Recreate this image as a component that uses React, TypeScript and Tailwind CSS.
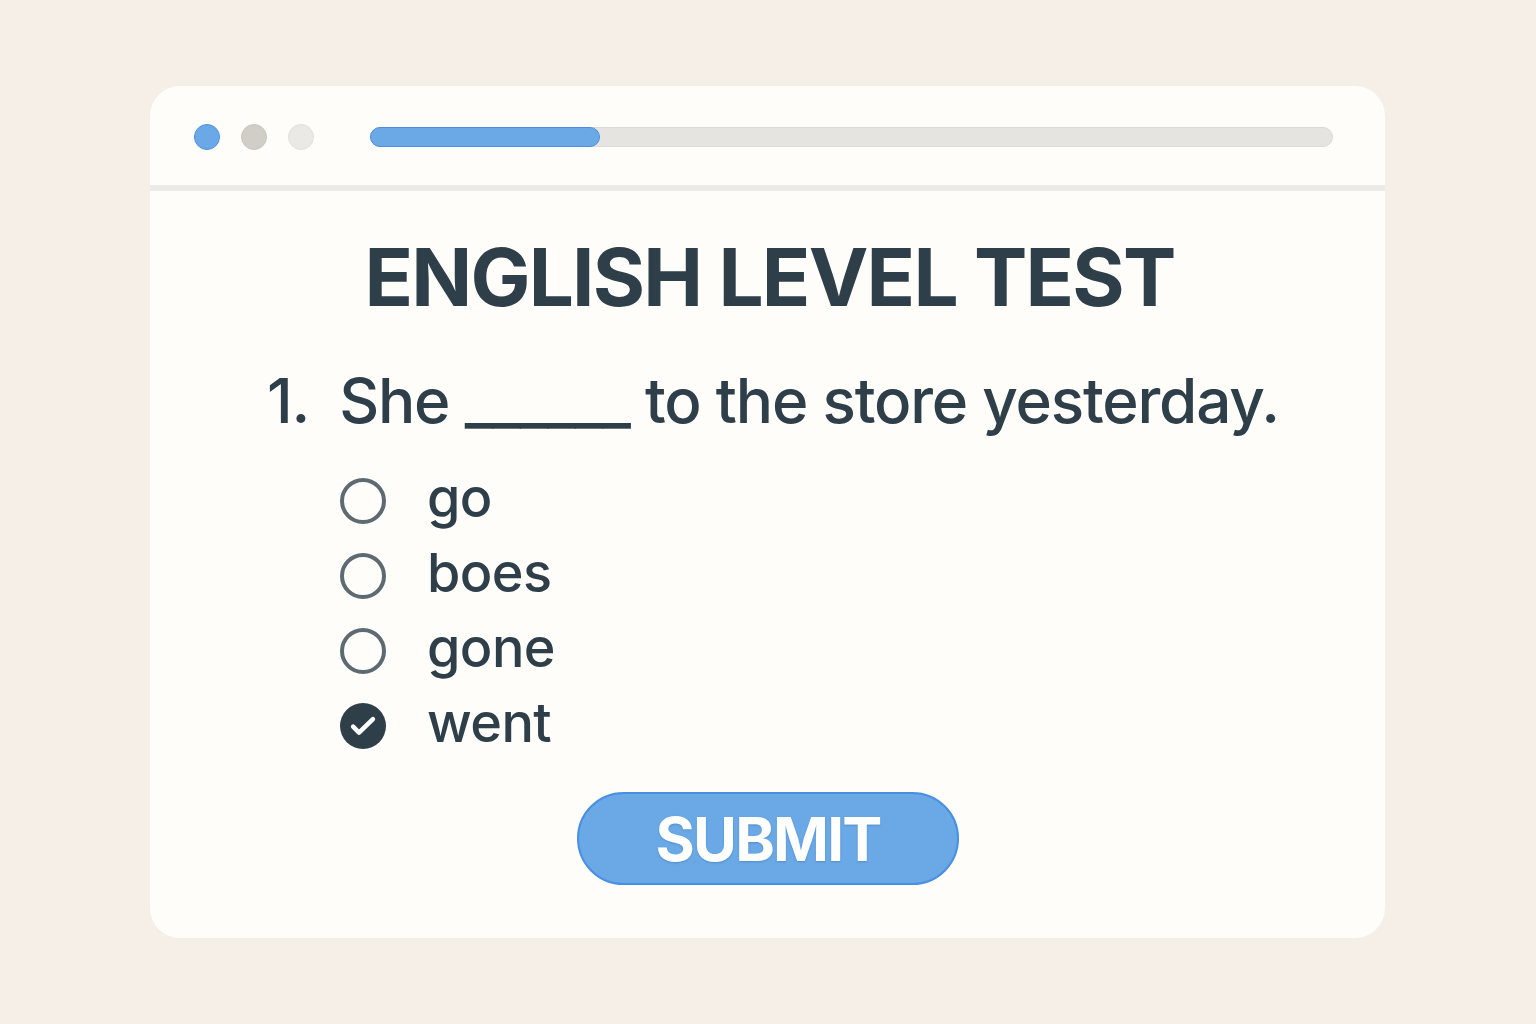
import React from "react";

const options = [
  { label: "go", checked: false },
  { label: "boes", checked: false },
  { label: "gone", checked: false },
  { label: "went", checked: true },
];

export default function App() {
  return (
    <div
      className="w-[1536px] h-[1024px] bg-[#f5efe7] pt-[86px] pl-[150px]"
      style={{ fontFamily: "Inter, 'Noto Sans', sans-serif" }}
    >
      <div className="w-[1235px] h-[852px] bg-[#fefdfa] rounded-[30px] flex flex-col">
        <div className="h-[99px] flex items-center pl-[44px] pr-[52px] pt-[2px]">
          <div className="flex items-center gap-[21px]">
            <div className="w-[26px] h-[26px] rounded-full bg-[#6aa9e6] border border-[#4a90e2]" />
            <div className="w-[26px] h-[26px] rounded-full bg-[#d1cec8] border border-[#c9c5bf]" />
            <div className="w-[26px] h-[26px] rounded-full bg-[#ebe9e5] border border-[#e2e0dc]" />
          </div>
          <div className="ml-[56px] flex-1 h-[20px] rounded-full bg-[#e6e4e0] border border-[#dddad5]">
            <div className="w-[228px] h-full rounded-full bg-[#6aa9e6] border border-[#4a90e2] -m-px box-content" />
          </div>
        </div>
        <div className="h-[6px] bg-[#edebe7]" />
        <div className="flex flex-col items-center">
          <h1 className="mt-[38px] text-[80px] leading-[96px] font-bold text-[#2f3f4a] tracking-[-1.8px] pl-[4px]">
            ENGLISH LEVEL TEST
          </h1>
        </div>
        <div className="pl-[117px] mt-[36px] text-[62px] leading-[80px] text-[#2f3f4a] font-medium tracking-[-1.2px] whitespace-nowrap">
          <span className="mr-[30px]">1.</span>She ______ to the store yesterday.
        </div>
        <div className="pl-[190px] mt-[30px] flex flex-col gap-[15px]">
          {options.map((o) => (
            <div key={o.label} className="flex items-center h-[60px]">
              {o.checked ? (
                <div className="w-[46px] h-[46px] rounded-full bg-[#2f3f4a] flex items-center justify-center">
                  <svg width="34" height="34" viewBox="0 0 24 24" fill="none" className="shrink-0">
                    <path d="M5 12.5l4.2 4.2L19 7.2" stroke="#ffffff" strokeWidth="3.2" strokeLinecap="round" strokeLinejoin="round" />
                  </svg>
                </div>
              ) : (
                <div className="w-[46px] h-[46px] rounded-full border-[4px] border-[#5d6a72]" />
              )}
              <span className="ml-[41px] text-[54px] leading-[60px] text-[#2f3f4a] font-medium tracking-[-0.6px] pb-[6px]">
                {o.label}
              </span>
            </div>
          ))}
        </div>
        <div className="flex justify-center mt-[36px] pl-[1px]">
          <button className="w-[382px] h-[93px] rounded-full bg-[#6aa9e6] border-2 border-[#4a90e2] text-white text-[60px] font-bold tracking-[-1.8px] flex items-center justify-center [text-shadow:0_1px_2px_rgba(40,90,150,0.35)]">
            SUBMIT
          </button>
        </div>
      </div>
    </div>
  );
}
